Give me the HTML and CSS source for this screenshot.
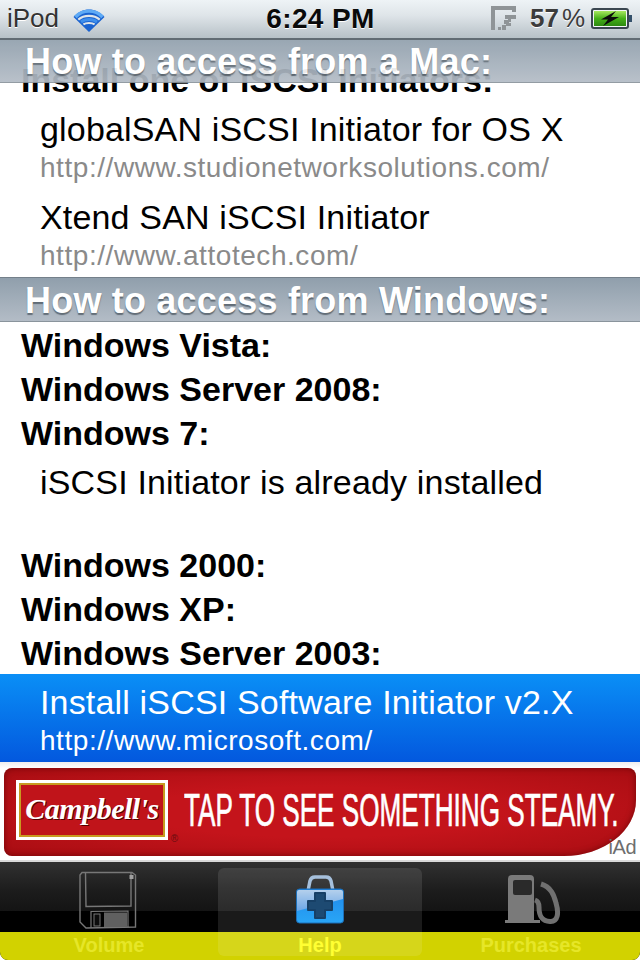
FILE: index.html
```
<!DOCTYPE html>
<html lang="en">
<head>
<meta charset="utf-8">
<title>Help</title>
<link rel="stylesheet" href="styles.css">
</head>
<body>
<div class="screen">
  <header class="status">
    <div class="status-left">
      <span class="carrier">iPod</span>
      <svg class="wifi" width="32" height="25" viewBox="0 0 32 25">
        <path d="M16 25 L0.5 10 C9 0 23 0 31.5 10 Z" fill="#1a63d0"/>
        <path d="M2.5 10 C10 2.2 22 2.2 29.5 10" fill="none" stroke="#5eaaf5" stroke-width="3.4"/>
        <path d="M5.3 12.6 C11 7.6 21 7.6 26.7 12.6" fill="none" stroke="#dfe5e9" stroke-width="2.2"/>
        <path d="M8 15 C12 11.7 20 11.7 24 15" fill="none" stroke="#3e8fec" stroke-width="3"/>
        <path d="M10.4 17.4 C13 15.5 19 15.5 21.6 17.4" fill="none" stroke="#dfe5e9" stroke-width="2"/>
      </svg>
    </div>
    <div class="time">6:24 PM</div>
    <div class="status-right">
      <svg class="sync" width="26" height="25" viewBox="0 0 26 25">
        <path d="M0 0H25V6H21V4H4V24H0Z M14 9H25V13H14Z M13 14H17V18H13Z M17 13H20V16H17Z M18 17H20V20H18Z M11 19H15V24H11Z M7 21H10V24H7Z M15 16H18V20H15Z" fill="#8f9497"/>
      </svg>
      <span class="battery-pct">57<span class="pct-sign">%</span></span>
      <svg class="battery" width="43" height="22" viewBox="0 0 43 22">
        <defs>
          <linearGradient id="charge" x1="0" y1="0" x2="0" y2="1">
            <stop offset="0" stop-color="#a8e860"/>
            <stop offset="0.5" stop-color="#46b018"/>
            <stop offset="1" stop-color="#2c8a10"/>
          </linearGradient>
        </defs>
        <rect x="1" y="1" width="36" height="19" rx="2" fill="#f2f5f6" stroke="#3a4650" stroke-width="2"/>
        <rect x="3" y="3" width="32" height="15" fill="url(#charge)"/>
        <path d="M38 7H41V14H38Z" fill="#34506a"/>
        <path d="M25 3 L10 11.5 H17 L12 18 L28 9 H20 Z" fill="#0c0c0c"/>
      </svg>
    </div>
  </header>

  <main class="content">
    <div class="section-head section-head-pinned">How to access from a Mac:</div>
    <div class="list">
      <div class="row row-bold">Install one of iSCSI Initiators:</div>
      <div class="row row-link"><div class="row-title">globalSAN iSCSI Initiator for OS X</div><div class="row-url">http://www.studionetworksolutions.com/</div></div>
      <div class="row row-link"><div class="row-title">Xtend SAN iSCSI Initiator</div><div class="row-url">http://www.attotech.com/</div></div>
      <div class="section-head">How to access from Windows:</div>
      <div class="row row-bold">Windows Vista:</div>
      <div class="row row-bold">Windows Server 2008:</div>
      <div class="row row-bold">Windows 7:</div>
      <div class="row row-link"><div class="row-title">iSCSI Initiator is already installed</div></div>
      <div class="row row-bold">Windows 2000:</div>
      <div class="row row-bold">Windows XP:</div>
      <div class="row row-bold">Windows Server 2003:</div>
      <div class="row row-link row-selected"><div class="row-title">Install iSCSI Software Initiator v2.X</div><div class="row-url">http://www.microsoft.com/</div></div>
    </div>
  </main>

  <aside class="ad-zone">
    <div class="ad">
      <div class="ad-logo"><div class="ad-logo-inner">Campbell's</div><span class="ad-reg">®</span></div>
      <div class="ad-copy"><span class="ad-copy-text">TAP TO SEE SOMETHING STEAMY.</span></div>
    </div>
    <span class="iad">iAd</span>
  </aside>

  <nav class="tabbar">
    <div class="tab">
      <svg class="tab-icon" width="62" height="62" viewBox="0 0 62 62">
        <g fill="none" stroke="#777">
          <path d="M4 2.5 H54 L57.5 5 V57 L8 58 L2 52 V5 Z" stroke-width="1.4"/>
          <path d="M7.5 3 L8 36.5 L53 36 V3" stroke-width="1.4"/>
          <path d="M13 58 V41.5 L50 41 V57" stroke-width="1.2"/>
        </g>
        <rect x="51.500" y="5" width="4" height="4" fill="#a0a0a0"/>
        <rect x="26" y="42.500" width="23" height="14.500" fill="#606060"/>
        <rect x="16" y="44" width="6" height="12" fill="#0c0c0c" stroke="#777"/>
      </svg>
      <span class="tab-label">Volume</span>
    </div>
    <div class="tab tab-active">
      <svg class="tab-icon tab-icon-help" width="48" height="49" viewBox="0 0 48 49">
        <defs>
          <linearGradient id="caseFill" x1="0" y1="0" x2="0" y2="1">
            <stop offset="0" stop-color="#2088ea"/>
            <stop offset="1" stop-color="#29a6f6"/>
          </linearGradient>
          <linearGradient id="caseGloss" x1="0" y1="0" x2="0" y2="1">
            <stop offset="0" stop-color="#b4d0ec"/>
            <stop offset="1" stop-color="#6ca6e6"/>
          </linearGradient>
        </defs>
        <path d="M12 16 L14 6 Q15 2 19 2 H30 Q34 2 35 6 L37 16" fill="none" stroke="#a6c0dc" stroke-width="3.5"/>
        <rect x="0.500" y="14" width="47" height="34" rx="3" fill="url(#caseFill)" stroke="#1c6fb8" stroke-width="1"/>
        <path d="M1 36 L47 24 V17 Q47 15 45 15 H3 Q1 15 1 17 Z" fill="url(#caseGloss)"/>
        <path d="M19 18 H29 V26 H36 V35 H29 V43 H19 V35 H12 V26 H19 Z" fill="#1d4a72" stroke="#174066" stroke-linejoin="round" stroke-width="2"/>
      </svg>
      <span class="tab-label">Help</span>
    </div>
    <div class="tab">
      <svg class="tab-icon tab-icon-pump" width="60" height="52" viewBox="0 0 60 52">
        <path d="M7 6 Q7 2 11 2 H29 Q33 2 33 6 V47 H39 V50 H4 V47 H7 Z" fill="#7a7a7a"/>
        <rect x="12" y="7" width="19" height="15" rx="2" fill="#2a2a2a"/>
        <path d="M40 11 C50 14 53 22 55 30 C58 40 57 49 49 48.500 C40 48 38 42 38 34 C38 30 37 28 34 27" fill="none" stroke="#707070" stroke-width="5"/>
      </svg>
      <span class="tab-label">Purchases</span>
    </div>
    <div class="tab-strip"></div>
  </nav>
</div>
</body>
</html>
```
FILE: styles.css
```
* { box-sizing: border-box; }
html, body { margin: 0; padding: 0; background: #000; }
body { font-family: "Liberation Sans", Arial, sans-serif; }

.screen {
  width: 640px;
  height: 960px;
  display: flex;
  flex-direction: column;
  overflow: hidden;
  background: #fff;
}

/* status bar */
.status {
  flex: none;
  height: 40px;
  display: grid;
  grid-template-columns: 1fr auto 1fr;
  align-items: center;
  padding: 0 6px 1px 7px;
  background: linear-gradient(#eef3f6, #dfe5e9 40%, #b7c1c7);
  border-bottom: 2px solid #626c74;
  position: relative;
  z-index: 3;
}
.status-left, .status-right { display: flex; align-items: center; }
.status-right { justify-content: flex-end; }
.carrier {
  font-size: 26px;
  color: #333;
  text-shadow: 0 1px 0 #fff;
}
.wifi { margin: 2px 0 0 14px; }
.time {
  font-size: 28px;
  font-weight: 700;
  letter-spacing: 0.4px;
  color: #0a0a0a;
  text-shadow: 0 1px 0 #fff;
}
.sync { margin-right: 13px; }
.battery-pct {
  font-size: 26px;
  font-weight: 700;
  color: #3c3c3c;
  text-shadow: 0 1px 0 #fff;
}
.pct-sign { font-weight: 400; margin-left: 3px; }
.battery { margin-left: 6px; }

/* list */
.content {
  flex: none;
  height: 722px;
  position: relative;
  overflow: hidden;
  background: #fff;
}
.list { padding-top: 17px; }
.section-head {
  height: 45px;
  padding: 0 0 0 25px;
  font-size: 36px;
  line-height: 46px;
  font-weight: 700;
  letter-spacing: 0.2px;
  color: #fff;
  text-shadow: 0 2px 1px rgba(60, 70, 80, 0.65);
  background: linear-gradient(#909fac, #b3bcc6);
  border-top: 1px solid #74808a;
  border-bottom: 1px solid #8a949c;
}
.section-head-pinned {
  position: absolute;
  top: -2px;
  left: 0;
  right: 0;
  z-index: 2;
  opacity: 0.92;
}
.row { color: #000; }
.row-bold {
  height: 44px;
  padding-left: 21px;
  font-size: 34px;
  font-weight: 700;
  line-height: 46px;
}
.row-link {
  height: 88px;
  padding-left: 40px;
}
.row-title {
  font-size: 34px;
  letter-spacing: 0.17px;
  line-height: 38px;
  padding-top: 9px;
  height: 48px;
}
.row-url {
  font-size: 28px;
  letter-spacing: 0.55px;
  line-height: 30px;
  padding-top: 4px;
  color: #8a8a8a;
}
.row-selected {
  background: linear-gradient(#0a8ff6, #0358de);
  color: #fff;
}
.row-selected .row-url { color: #fff; }

/* ad */
.ad-zone {
  flex: none;
  height: 98px;
  padding: 6px 4px 0;
  position: relative;
  background: linear-gradient(#eee, #fff 6px);
}
.ad {
  height: 88px;
  display: flex;
  align-items: center;
  padding: 0 0 4px 12px;
  border-radius: 8px 8px 72px 8px / 8px 8px 56px 8px;
  background: radial-gradient(ellipse at 50% 50%, #c4141b 40%, #a80d12 100%);
  box-shadow: inset 0 0 6px rgba(90, 0, 0, 0.7);
}
.ad-logo {
  position: relative;
  width: 152px;
  height: 60px;
  border: 3px solid #fff;
  flex: none;
}
.ad-logo-inner {
  height: 100%;
  border: 2px solid #c89a20;
  background: #c0141a;
  color: #fff;
  font-family: "Liberation Serif", serif;
  font-style: italic;
  font-weight: 700;
  font-size: 30px;
  line-height: 48px;
  text-align: center;
  letter-spacing: -0.5px;
  text-shadow: 1px 1px 0 #500;
}
.ad-reg {
  position: absolute;
  right: -13px;
  bottom: -7px;
  font-size: 10px;
  color: #6a0d10;
}
.ad-copy {
  margin-left: 16px;
  white-space: nowrap;
}
.ad-copy-text {
  display: inline-block;
  font-family: "Liberation Sans", Arial, sans-serif;
  font-size: 46px;
  line-height: 46px;
  color: #fff;
  -webkit-text-stroke: 0.7px #fff;
  transform: scaleX(0.568);
  transform-origin: left center;
}
.iad {
  position: absolute;
  right: 4px;
  bottom: 1px;
  font-size: 20px;
  letter-spacing: -0.5px;
  color: #6e6e6e;
}

/* tab bar */
.tabbar {
  flex: none;
  height: 100px;
  position: relative;
  display: grid;
  grid-template-columns: 218px 204px 218px;
  padding-top: 6px;
  border-top: 2px solid #d8d8d8;
  background: linear-gradient(#2f2f2f 2px, #1c1c1c 30%, #141414 50%, #000 50%);
  border-radius: 0 0 8px 8px;
}
.tab {
  position: relative;
  z-index: 1;
  display: flex;
  flex-direction: column;
  align-items: center;
  height: 88px;
  padding-top: 2px;
  border-radius: 6px;
}
.tab-active { background: rgba(255, 255, 255, 0.1); }
.tab-icon {
  display: block;
  flex: none;
  height: 62px;
  margin-bottom: 1px;
}
.tab-icon-help { height: 49px; margin-top: 5px; margin-bottom: 9px; }
.tab-icon-pump { height: 52px; margin-top: 3px; margin-bottom: 8px; }
.tab-label {
  font-size: 20px;
  font-weight: 700;
  line-height: 24px;
  color: #e6e628;
}
.tab-active .tab-label { color: #ffff33; }
.tab-strip {
  position: absolute;
  left: 0;
  right: 0;
  bottom: 0;
  height: 28px;
  background: #d2d200;
  border-radius: 0 0 8px 8px;
}
```
